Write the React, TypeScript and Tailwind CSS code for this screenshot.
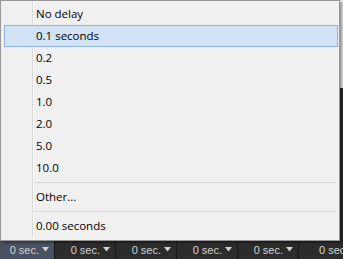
import React from "react";

const items = ["No delay", "0.1 seconds", "0.2", "0.5", "1.0", "2.0", "5.0", "10.0"];

function Row({ label, active }: { label: string; active?: boolean }) {
  return (
    <div className="relative h-[22px] flex items-center">
      {active && (
        <div className="absolute left-[3px] right-[1px] top-0 bottom-0 bg-[#d1e3f4] border border-[#8fb3dd]" />
      )}
      <span className="relative pl-[35px] text-[11.5px] text-black leading-none">{label}</span>
    </div>
  );
}

function Sep() {
  return (
    <div className="h-[7px] flex items-center pl-[32px] pr-[3px]">
      <div className="h-px w-full bg-[#d5d5d5]" />
    </div>
  );
}

function Cell({ active, width }: { active?: boolean; width: string }) {
  return (
    <div
      className={`${width} shrink-0 h-full flex items-center justify-end pr-[5px] gap-[3px] border-r border-[#1a1a1a] ${
        active ? "bg-[#4a5161]" : "bg-[#2c2c2c]"
      }`}
    >
      <span
        className="text-[11px] text-[#d4d4d4] leading-none whitespace-nowrap"
        style={{ fontFamily: '"Liberation Sans", Arial, sans-serif' }}
      >
        0 sec.
      </span>
      <svg width="7" height="5" viewBox="0 0 7 5" className="mt-[-1px]">
        <polygon points="0,0 7,0 3.5,4.5" fill="#d4d4d4" />
      </svg>
    </div>
  );
}

export default function App() {
  return (
    <div
      className="relative w-[343px] h-[259px] overflow-hidden bg-[#2a2a2a]"
      style={{ fontFamily: '"Segoe UI", "Open Sans", "Noto Sans", sans-serif' }}
    >
      <div className="h-[88px] bg-[#e8e8e8]" />
      <div className="absolute left-0 right-0 bottom-0 h-[18px] flex bg-[#2c2c2c] overflow-hidden">
        <Cell active width="w-[55px]" />
        <Cell width="w-[61px]" />
        <Cell width="w-[61px]" />
        <Cell width="w-[61px]" />
        <Cell width="w-[61px]" />
        <div className="shrink-0 h-full flex items-center pl-[20px]">
          <span
            className="text-[11px] text-[#d4d4d4] leading-none whitespace-nowrap"
            style={{ fontFamily: '"Liberation Sans", Arial, sans-serif' }}
          >
            0 sec.
          </span>
        </div>
      </div>
      <div className="absolute left-0 top-0 w-[340px] h-[241px] bg-[#f0f0f0] border border-[#979797] shadow-[2px_2px_2px_rgba(0,0,0,0.35)] pt-[2px]">
        <div className="absolute left-[31px] top-0 bottom-[2px] w-px bg-[#d8d8d8]" />
        <div className="absolute left-[32px] top-0 bottom-[2px] w-px bg-[#ffffff]" />
        {items.map((l, i) => (
          <Row key={l} label={l} active={i === 1} />
        ))}
        <Sep />
        <Row label="Other..." />
        <Sep />
        <Row label="0.00 seconds" />
      </div>
    </div>
  );
}
